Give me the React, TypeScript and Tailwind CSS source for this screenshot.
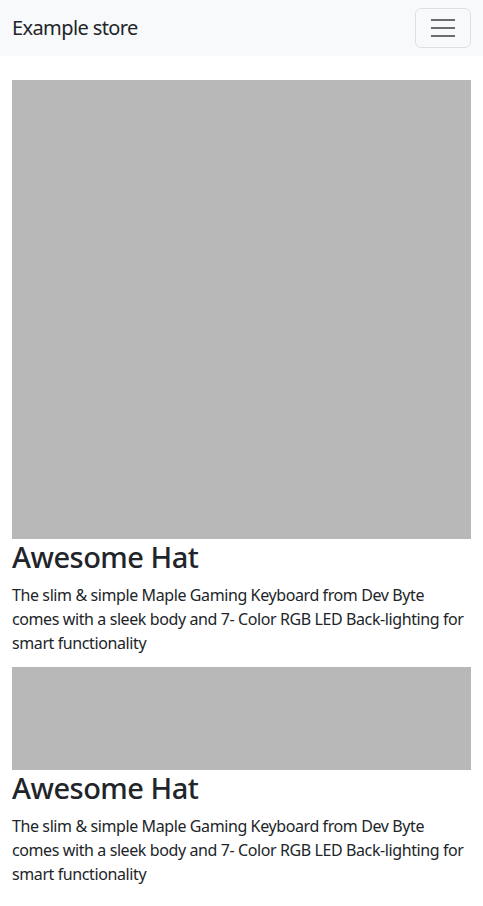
const products = [
  { name: 'Awesome Hat', imageHeight: 'h-[459px]' },
  { name: 'Awesome Hat', imageHeight: 'h-[103px]' },
]

const description =
  'The slim & simple Maple Gaming Keyboard from Dev Byte comes with a sleek body and 7- Color RGB LED Back-lighting for smart functionality'

export default function App() {
  return (
    <div className="min-h-screen bg-white text-[#212529] font-['Noto_Sans',sans-serif]">
      <nav className="h-14 bg-[#f8f9fa] flex items-center justify-between px-3">
        <span className="text-xl tracking-[-0.6px]">Example store</span>
        <button className="w-14 h-10 rounded-md border border-black/10 flex flex-col items-center justify-center gap-[6px]">
          <span className="block w-6 h-[2px] bg-[#6c6c6c]" />
          <span className="block w-6 h-[2px] bg-[#6c6c6c]" />
          <span className="block w-6 h-[2px] bg-[#6c6c6c]" />
        </button>
      </nav>

      <main className="px-3 pt-6">
        {products.map((product, i) => (
          <div key={i}>
            <div className={`${product.imageHeight} bg-[#b8b8b8]`} />
            <h1 className="text-[29px] leading-[1.2] font-medium tracking-[-0.5px] mt-[1px] mb-2">
              {product.name}
            </h1>
            <p className="text-base leading-6 tracking-[-0.4px] mb-[12px]">{description}</p>
          </div>
        ))}
      </main>
    </div>
  )
}
